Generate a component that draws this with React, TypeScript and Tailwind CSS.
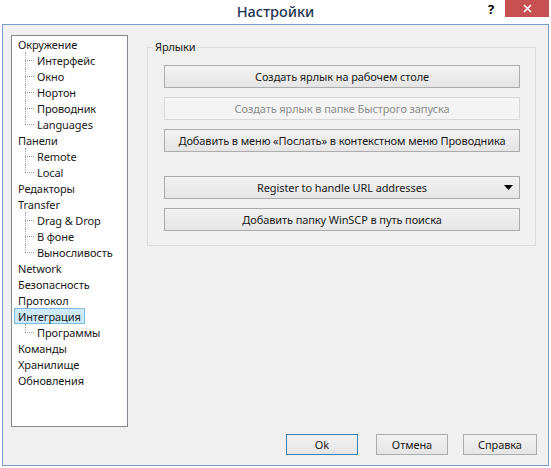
import React from "react";

type Node = { label: string; children?: string[]; selected?: boolean };

const tree: Node[] = [
  { label: "Окружение", children: ["Интерфейс", "Окно", "Нортон", "Проводник", "Languages"] },
  { label: "Панели", children: ["Remote", "Local"] },
  { label: "Редакторы" },
  { label: "Transfer", children: ["Drag & Drop", "В фоне", "Выносливость"] },
  { label: "Network" },
  { label: "Безопасность" },
  { label: "Протокол" },
  { label: "Интеграция", children: ["Программы"], selected: true },
  { label: "Команды" },
  { label: "Хранилище" },
  { label: "Обновления" },
];

function WinButton({
  children,
  disabled,
  dropdown,
}: {
  children: React.ReactNode;
  disabled?: boolean;
  dropdown?: boolean;
}) {
  return (
    <div
      className={
        "relative h-[23px] w-[356px] flex items-center justify-center border " +
        (disabled
          ? "border-[#d9d9d9] bg-[#f4f4f4] text-[#8d8d8d]"
          : "border-[#acacac] bg-gradient-to-b from-[#f2f2f2] to-[#e5e5e5] text-[#1a1a1a]")
      }
    >
      <span className="leading-none whitespace-nowrap">{children}</span>
      {dropdown && (
        <svg className="absolute right-[6px] top-[8px]" width="9" height="5" viewBox="0 0 9 5">
          <polygon points="0,0 9,0 4.5,5" fill="#000" />
        </svg>
      )}
    </div>
  );
}

function DialogButton({ children, def, w }: { children: React.ReactNode; def?: boolean; w: string }) {
  return (
    <div
      className={
        "h-[21px] flex items-center justify-center border bg-gradient-to-b from-[#f2f2f2] to-[#e5e5e5] text-[#1a1a1a] " +
        w +
        " " +
        (def ? "border-[#3c7fb1]" : "border-[#acacac]")
      }
    >
      <span className="leading-none">{children}</span>
    </div>
  );
}

export default function App() {
  return (
    <div
      className="w-[551px] h-[468px] bg-white overflow-hidden flex flex-col text-[11px] tracking-[-0.1px] text-[#1a1a1a]"
      style={{ fontFamily: '"Noto Sans", "Open Sans", sans-serif' }}
    >
      {/* Title bar */}
      <div className="relative h-[24px] shrink-0 flex items-center justify-center">
        <span className="text-[14.5px] tracking-normal leading-none font-medium text-[#1e3553] mt-[-1px]">Настройки</span>
        <span className="absolute left-[488px] top-[0px] text-[13px] font-bold text-black">?</span>
        <div className="absolute left-[505px] top-0 w-[44px] h-[17px] bg-[#c75050] flex items-center justify-center">
          <svg width="9" height="9" viewBox="0 0 9 9">
            <path d="M1 1 L8 8 M8 1 L1 8" stroke="#fff" strokeWidth="1.6" />
          </svg>
        </div>
      </div>

      {/* Client area */}
      <div className="mx-[2px] h-[442px] border border-[#7a9cc6] bg-[#f0f0f0] flex flex-col">
        <div className="flex pt-[10px] pl-[8px]">
          {/* Tree */}
          <div className="w-[117px] h-[392px] border border-[#828790] bg-white shrink-0">
            {tree.map((n) => (
              <div key={n.label}>
                <div className="h-[16px] flex items-center">
                  {n.selected ? (
                    <span className="ml-[2px] h-[16px] px-[3px] border border-[#7dbde6] bg-[#cde8f7] flex items-center leading-none">
                      {n.label}
                    </span>
                  ) : (
                    <span className="ml-[6px] leading-none">{n.label}</span>
                  )}
                </div>
                {n.children?.map((c, i) => {
                  const last = i === n.children!.length - 1;
                  return (
                    <div key={c} className="relative h-[16px] flex items-center pl-[25px]">
                      <span
                        className={
                          "absolute left-[13px] top-0 border-l border-dotted border-[#a0a0a0] " +
                          (last ? "h-[8px]" : "h-[16px]")
                        }
                      />
                      <span className="absolute left-[13px] top-[8px] w-[9px] border-t border-dotted border-[#a0a0a0]" />
                      <span className="leading-none">{c}</span>
                    </div>
                  );
                })}
              </div>
            ))}
          </div>

          {/* Group box */}
          <div className="ml-[19px] mt-[12px] relative w-[389px] h-[199px] border border-[#dcdcdc] pt-[17px] pl-[16px]">
            <span className="absolute left-[5px] top-[-9px] px-[2px] bg-[#f0f0f0] leading-[16px]">
              Ярлыки
            </span>
            <div className="flex flex-col">
              <WinButton>Создать ярлык на рабочем столе</WinButton>
              <div className="mt-[9px]">
                <WinButton disabled>Создать ярлык в папке Быстрого запуска</WinButton>
              </div>
              <div className="mt-[9px]">
                <WinButton>Добавить в меню «Послать» в контекстном меню Проводника</WinButton>
              </div>
              <div className="mt-[24px]">
                <WinButton dropdown>Register to handle URL addresses</WinButton>
              </div>
              <div className="mt-[9px]">
                <WinButton>Добавить папку WinSCP в путь поиска</WinButton>
              </div>
            </div>
          </div>
        </div>

        {/* Dialog buttons */}
        <div className="flex justify-end pr-[11px] mt-[7px]">
          <DialogButton def w="w-[72px]">Ok</DialogButton>
          <div className="ml-[18px]">
            <DialogButton w="w-[72px]">Отмена</DialogButton>
          </div>
          <div className="ml-[15px]">
            <DialogButton w="w-[74px]">Справка</DialogButton>
          </div>
        </div>
      </div>
    </div>
  );
}
